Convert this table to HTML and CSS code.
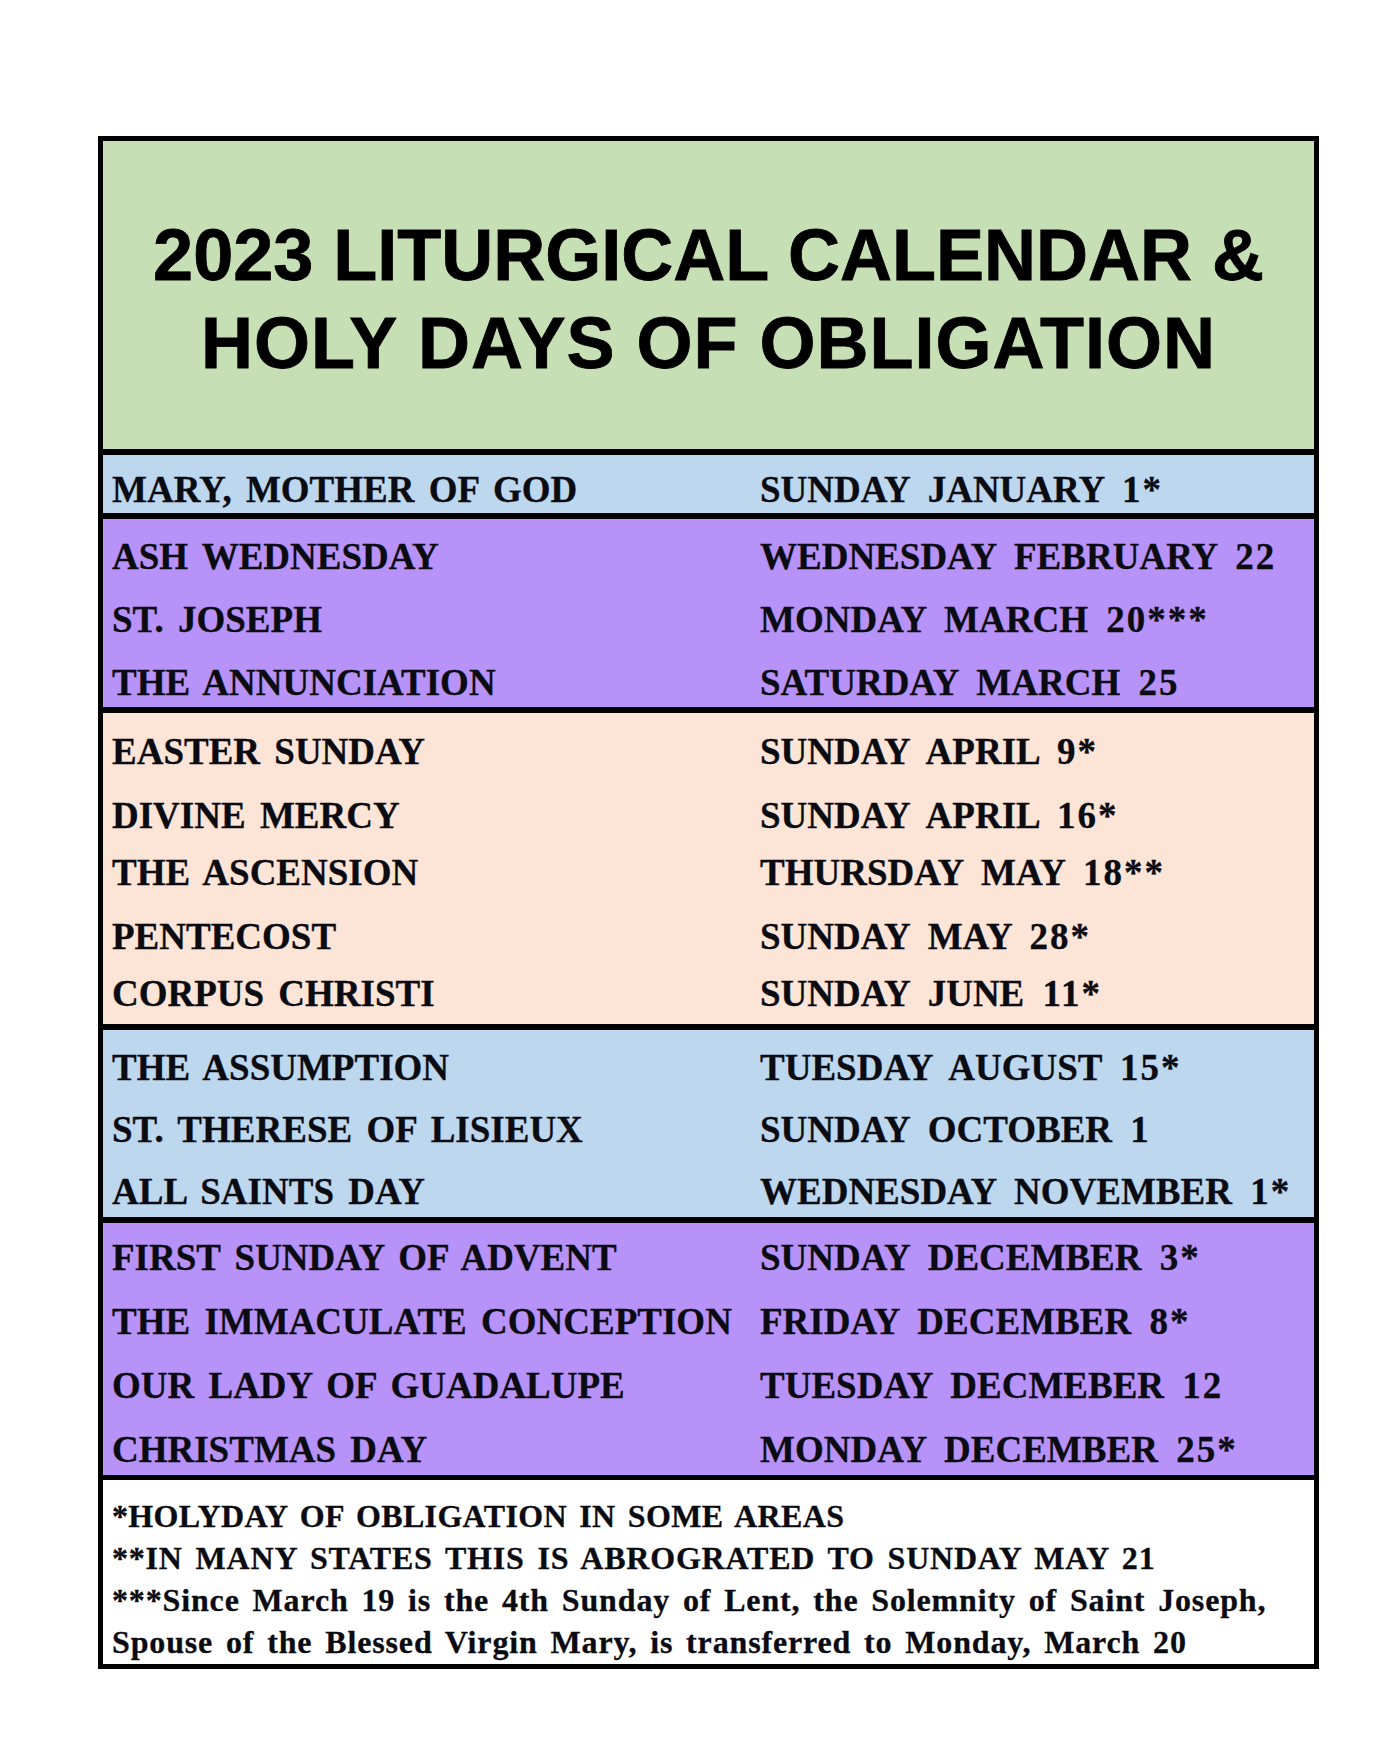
FILE: index.html
```html
<!DOCTYPE html>
<html lang="en">
<head>
<meta charset="utf-8">
<title>2023 Liturgical Calendar &amp; Holy Days of Obligation</title>
<link rel="stylesheet" href="styles.css">
</head>
<body>
<div class="page">
  <div class="sheet">
    <header class="header">
      <h1 class="title"><span class="title-line">2023 LITURGICAL CALENDAR &amp;</span><span class="title-line second">HOLY DAYS OF OBLIGATION</span></h1>
    </header>

    <section class="sec blue sec-single">
      <div class="row"><span class="feast">MARY, MOTHER OF GOD</span><span class="date">SUNDAY JANUARY <span class="num">1*</span></span></div>
    </section>

    <section class="sec purple sec-lent">
      <div class="row"><span class="feast">ASH WEDNESDAY</span><span class="date">WEDNESDAY FEBRUARY <span class="num">22</span></span></div>
      <div class="row"><span class="feast">ST. JOSEPH</span><span class="date">MONDAY MARCH <span class="num">20***</span></span></div>
      <div class="row"><span class="feast">THE ANNUNCIATION</span><span class="date">SATURDAY MARCH <span class="num">25</span></span></div>
    </section>

    <section class="sec peach sec-easter">
      <div class="row"><span class="feast">EASTER SUNDAY</span><span class="date">SUNDAY APRIL <span class="num">9*</span></span></div>
      <div class="row close"><span class="feast">DIVINE MERCY</span><span class="date">SUNDAY APRIL <span class="num">16*</span></span></div>
      <div class="row"><span class="feast">THE ASCENSION</span><span class="date">THURSDAY MAY <span class="num">18**</span></span></div>
      <div class="row close"><span class="feast">PENTECOST</span><span class="date">SUNDAY MAY <span class="num">28*</span></span></div>
      <div class="row"><span class="feast">CORPUS CHRISTI</span><span class="date">SUNDAY JUNE <span class="num">11*</span></span></div>
    </section>

    <section class="sec blue sec-summer">
      <div class="row"><span class="feast">THE ASSUMPTION</span><span class="date">TUESDAY AUGUST <span class="num">15*</span></span></div>
      <div class="row"><span class="feast">ST. THERESE OF LISIEUX</span><span class="date">SUNDAY OCTOBER <span class="num">1</span></span></div>
      <div class="row"><span class="feast">ALL SAINTS DAY</span><span class="date">WEDNESDAY NOVEMBER <span class="num">1*</span></span></div>
    </section>

    <section class="sec purple sec-advent">
      <div class="row"><span class="feast">FIRST SUNDAY OF ADVENT</span><span class="date">SUNDAY DECEMBER <span class="num">3*</span></span></div>
      <div class="row"><span class="feast">THE IMMACULATE CONCEPTION</span><span class="date">FRIDAY DECEMBER <span class="num">8*</span></span></div>
      <div class="row"><span class="feast">OUR LADY OF GUADALUPE</span><span class="date">TUESDAY DECMEBER <span class="num">12</span></span></div>
      <div class="row"><span class="feast">CHRISTMAS DAY</span><span class="date">MONDAY DECEMBER <span class="num">25*</span></span></div>
    </section>

    <footer class="notes">
      <p class="note">*HOLYDAY OF OBLIGATION IN SOME AREAS</p>
      <p class="note wide">**IN MANY STATES THIS IS ABROGRATED TO SUNDAY MAY 21</p>
      <p class="note mixed">***Since March 19 is the 4th Sunday of Lent, the Solemnity of Saint Joseph,</p>
      <p class="note mixed">Spouse of the Blessed Virgin Mary, is transferred to Monday, March 20</p>
    </footer>
  </div>
</div>
</body>
</html>
```

FILE: styles.css
```css
html, body {
  margin: 0;
  padding: 0;
  background: #ffffff;
}

.page {
  padding: 136px 0 0 98px;
}

.sheet {
  width: 1221px;
  box-sizing: border-box;
  border: 5px solid #000000;
  color: #0b0b12;
}

/* Title block */
.header {
  background: #c7dfb5;
  padding: 70px 0 62px;
  text-align: center;
}

.title {
  margin: 0;
  font-family: "Liberation Sans", Arial, sans-serif;
  font-weight: 700;
  font-size: 72px;
  line-height: 88px;
  color: #000000;
  -webkit-text-stroke: 0.8px #000000;
}

.title-line {
  display: block;
}

.title-line.second {
  letter-spacing: 1px;
}

/* Sections */
.sec {
  border-top: 6px solid #000000;
  display: flex;
  flex-direction: column;
  gap: 22px;
  padding: 17px 0 4px 9px;
}

.blue { background: #bdd7ee; }
.purple { background: #b792f8; }
.peach { background: #fce4d6; }

.sec-single { padding: 14px 0 3px 9px; }
.sec-lent { padding: 17px 0 4px 9px; }
.sec-easter { padding: 18px 0 10px 9px; gap: 23px; }
.sec-summer { padding: 17px 0 5px 9px; gap: 21px; }
.sec-advent { padding: 14px 0 5px 9px; gap: 23px; }

.row {
  display: grid;
  grid-template-columns: 648px 1fr;
  font-family: "Liberation Serif", "Times New Roman", serif;
  font-weight: 700;
  font-size: 37px;
  line-height: 41px;
  white-space: nowrap;
  -webkit-text-stroke: 0.3px #0b0b12;
}

.feast {
  word-spacing: 5px;
}

.date {
  word-spacing: 9px;
}

.num {
  letter-spacing: 2px;
}

.row.close {
  margin-bottom: -7px;
}

/* Footnotes */
.notes {
  border-top: 5px solid #000000;
  background: #ffffff;
  padding: 15px 0 1px 9px;
}

.note {
  margin: 0;
  font-family: "Liberation Serif", "Times New Roman", serif;
  font-weight: 700;
  font-size: 32px;
  line-height: 42px;
  word-spacing: 4px;
  letter-spacing: 0.35px;
  white-space: nowrap;
  -webkit-text-stroke: 0.3px #0b0b12;
}

.note.wide {
  letter-spacing: 0.8px;
}

.note.mixed {
  letter-spacing: 0.85px;
}
```
